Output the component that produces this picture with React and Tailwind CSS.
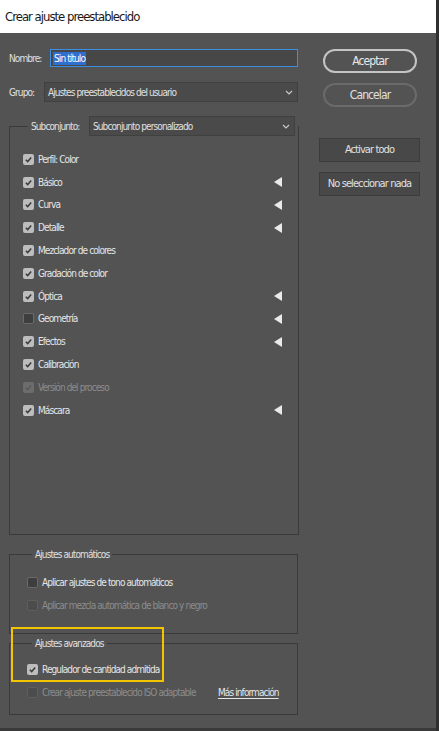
import React from 'react';

// Fuente condensada para imitar la interfaz de Adobe
const FONT = { fontFamily: "'Liberation Sans Narrow', 'DejaVu Sans Condensed', Roboto, sans-serif" };
// Texto pequeño de la interfaz, estrecho como en Camera Raw
const TXT = 'text-[10px] tracking-[-0.9px] whitespace-nowrap';

const Check = ({ state = 'on' }) => {
  // state: on | off | disabledOn | disabledOff
  if (state === 'off') {
    return <span className="h-[11px] w-[11px] shrink-0 rounded-[2px] border border-[#6a6a6a] bg-[#3e3e3e]" />;
  }
  if (state === 'disabledOff') {
    return <span className="h-[11px] w-[11px] shrink-0 rounded-[2px] border border-[#5e5e5e] bg-[#4c4c4c]" />;
  }
  const dis = state === 'disabledOn';
  return (
    <span className={`flex h-[11px] w-[11px] shrink-0 items-center justify-center rounded-[2px] ${dis ? 'bg-[#6c6c6c]' : 'bg-[#bdbdbd]'}`}>
      <svg viewBox="0 0 10 10" className="h-[9px] w-[9px]">
        <path d="M2 5.2 L4.1 7.3 L8 2.8" fill="none" stroke={dis ? '#5a5a5a' : '#3a3a3a'} strokeWidth="1.6" />
      </svg>
    </span>
  );
};

const Arrow = () => (
  <svg viewBox="0 0 8 10" className="h-[10px] w-[8px]">
    <path d="M8 0 L0 5 L8 10 Z" fill="#eaeaea" />
  </svg>
);

const Row = ({ label, state = 'on', arrow = false }) => (
  <div className="flex h-[22.8px] items-center pr-[16px]">
    <Check state={state} />
    <span className={`ml-[4px] flex-1 ${TXT} ${state.startsWith('disabled') ? 'text-[#8c8c8c]' : 'text-[#e6e6e6]'}`}>{label}</span>
    {arrow && <Arrow />}
  </div>
);

const Chevron = () => (
  <svg viewBox="0 0 8 5" className="h-[5px] w-[8px]">
    <path d="M1 1 L4 4 L7 1" fill="none" stroke="#c8c8c8" strokeWidth="1.2" />
  </svg>
);

export default function App() {
  const items = [
    ['Perfil: Color', 'on', false],
    ['Básico', 'on', true],
    ['Curva', 'on', true],
    ['Detalle', 'on', true],
    ['Mezclador de colores', 'on', false],
    ['Gradación de color', 'on', false],
    ['Óptica', 'on', true],
    ['Geometría', 'off', true],
    ['Efectos', 'on', true],
    ['Calibración', 'on', false],
    ['Versión del proceso', 'disabledOn', false],
    ['Máscara', 'on', true],
  ];

  return (
    <div style={FONT} className="flex h-[731px] w-[439px] overflow-hidden bg-[#2f2f2f]">
      <div className="flex w-[436px] flex-col">
        {/* Barra de título */}
        <div className="flex h-[33px] items-center bg-white pl-[5px] text-[13px] tracking-[-1px] text-[#1a1a1a]">
          Crear ajuste preestablecido
        </div>

        <div className="relative flex h-[696px] border-b border-[#3a3a3a] bg-[#535353] text-[#e0e0e0]">
          {/* Columna izquierda */}
          <div className="flex w-[300px] flex-col pl-[9px]">
            <div className="mt-[16px] flex h-[18px] items-center">
              <span className={`w-[41px] ${TXT}`}>Nombre:</span>
              <div className="flex h-[18px] w-[248px] items-center border border-[#3c8fe0] bg-[#474747] pl-[2px]">
                <span className={`bg-[#2f6fd0] px-[1px] leading-[13px] text-white ${TXT}`}>Sin título</span>
              </div>
            </div>
            <div className="mt-[15px] flex h-[20px] items-center">
              <span className={`w-[35px] ${TXT}`}>Grupo:</span>
              <div className="flex h-[20px] w-[254px] items-center justify-between border border-[#404040] bg-[#4a4a4a] pl-[3px] pr-[4px]">
                <span className={TXT}>Ajustes preestablecidos del usuario</span>
                <Chevron />
              </div>
            </div>

            <fieldset className="mt-[14px] h-[419px] w-[289px] border border-[#3a3a3a] pl-[13px] pt-[12px]">
              <legend className="ml-[5px] flex items-center px-[3px]">
                <span className={`w-[58px] ${TXT}`}>Subconjunto:</span>
                <div className="flex h-[20px] w-[206px] items-center justify-between border border-[#404040] bg-[#4a4a4a] pl-[3px] pr-[4px]">
                  <span className={TXT}>Subconjunto personalizado</span>
                  <Chevron />
                </div>
              </legend>
              {items.map(([l, s, a]) => (
                <Row key={l} label={l} state={s} arrow={a} />
              ))}
            </fieldset>

            <fieldset className="mt-[12px] h-[87px] w-[289px] border border-[#3a3a3a] pl-[17px] pt-[9px]">
              <legend className={`ml-[5px] px-[3px] ${TXT}`}>Ajustes automáticos</legend>
              <Row label="Aplicar ajustes de tono automáticos" state="off" />
              <Row label="Aplicar mezcla automática de blanco y negro" state="disabledOff" />
            </fieldset>

            <fieldset className="mt-[2px] h-[79px] w-[289px] border border-[#3a3a3a] pl-[17px] pt-[7px]">
              <legend className={`ml-[5px] px-[3px] ${TXT}`}>Ajustes avanzados</legend>
              <Row label="Regulador de cantidad admitida" state="on" />
              <div className="flex h-[22.8px] items-center">
                <Check state="disabledOff" />
                <span className={`ml-[4px] w-[176px] text-[#8c8c8c] ${TXT}`}>Crear ajuste preestablecido ISO adaptable</span>
                <span className={`text-[#e6e6e6] underline underline-offset-2 ${TXT}`}>Más información</span>
              </div>
            </fieldset>
          </div>

          {/* Columna derecha */}
          <div className="flex flex-col pl-[19px]">
            <div className={`ml-[4px] mt-[16px] flex h-[24px] w-[94px] items-center justify-center rounded-full border-2 border-[#c4c4c4] text-[#e8e8e8] ${TXT} text-[12px]`}>
              Aceptar
            </div>
            <div className={`ml-[4px] mt-[10px] flex h-[24px] w-[94px] items-center justify-center rounded-full border-2 border-[#6a6a6a] text-[#e0e0e0] ${TXT} text-[12px]`}>
              Cancelar
            </div>
            <div className={`mt-[31px] flex h-[24px] w-[101px] items-center justify-center border border-[#3c3c3c] bg-[#484848] ${TXT} text-[11px]`}>
              Activar todo
            </div>
            <div className={`mt-[10px] flex h-[24px] w-[101px] items-center justify-center border border-[#3c3c3c] bg-[#484848] ${TXT} text-[11px]`}>
              No seleccionar nada
            </div>
          </div>

          {/* Recuadro amarillo de resaltado */}
          <div className="pointer-events-none absolute left-[11px] top-[594px] h-[55px] w-[153px] border-2 border-[#f2c500]" />
        </div>
        <div className="flex-1 bg-[#3a3a3a]" />
      </div>
      <div className="w-[3px] bg-[#2f2f2f]" />
    </div>
  );
}
